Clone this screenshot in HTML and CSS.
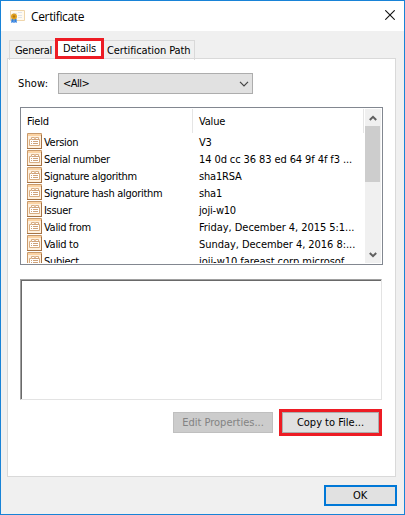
FILE: index.html
```
<!DOCTYPE html>
<html lang="en">
<head>
<meta charset="utf-8">
<title>Certificate</title>
<link rel="stylesheet" href="styles.css">
</head>
<body>
<svg class="defs" width="0" height="0" aria-hidden="true">
  <symbol id="field-icon" viewBox="0 0 15 16">
    <path fill="#fff1df" stroke="#c99a6c" d="M.5.5h14v15H.5z"/>
    <path fill="#fbd3a4" d="M1 1h13v2H1z"/>
    <path fill="#fff" stroke="#d8ad82" d="M2.500 6.500h2v-2h3v1h1v-1h3v2h1v6h-10z"/>
    <path stroke="#cfa27a" d="M5 6.500h7M4 8.500h1M6 8.500h5M4 10.500h1M6 10.500h5"/>
    <path stroke="#a67345" d="M0 15.500h15M14.500 2v14"/>
  </symbol>
</svg>
<div class="window">
  <header class="titlebar">
    <svg class="cert" width="16" height="13" viewBox="0 0 16 13">
      <path fill="#fffaf0" stroke="#efd5aa" d="M1.500.500h14v10h-14z"/>
      <path stroke="#dfe3ea" d="M4 3.500h4M9 2.500h4M9 5.500h4M9 7.500h4"/>
      <path fill="#2f7fe0" d="M2.500 8.500h2.300V13l-1.300-.8-1.300.8zM5.200 8.500h2.300l.3 4.500-1.300-.8-1.300.8z"/>
      <circle cx="5" cy="6.500" r="3" fill="#e0a01e"/><circle cx="5" cy="6.500" r="1.200" fill="#b5760f"/>
    </svg>
    <span class="title">Certificate</span>
    <svg class="close" width="10" height="10" viewBox="0 0 10 10"><path d="M.3.3l9.400 9.400M9.700.3L.3 9.700" stroke="#111" stroke-width="1.100"/></svg>
  </header>
  <nav class="tabs">
    <div class="tab general"><span>General</span></div>
    <div class="tab selected"><span>Details</span></div>
    <div class="tab path"><span>Certification Path</span></div>
  </nav>
  <main class="page">
    <div class="show"><span class="label">Show:</span>
      <div class="combo"><span>&lt;All&gt;</span><svg width="10" height="6" viewBox="0 0 10 6"><path d="M1 .8l4 4 4-4" fill="none" stroke="#444" stroke-width="1.200"/></svg></div>
    </div>
    <div class="list">
      <div class="table">
        <div class="head"><div class="hfield">Field</div><div class="hvalue">Value</div></div>
        <div class="row"><svg><use href="#field-icon"/></svg><span class="f">Version</span><span class="v">V3</span></div>
        <div class="row"><svg><use href="#field-icon"/></svg><span class="f">Serial number</span><span class="v serial">14 0d cc 36 83 ed 64 9f 4f f3 ...</span></div>
        <div class="row"><svg><use href="#field-icon"/></svg><span class="f">Signature algorithm</span><span class="v">sha1RSA</span></div>
        <div class="row"><svg><use href="#field-icon"/></svg><span class="f">Signature hash algorithm</span><span class="v">sha1</span></div>
        <div class="row"><svg><use href="#field-icon"/></svg><span class="f">Issuer</span><span class="v">joji-w10</span></div>
        <div class="row"><svg><use href="#field-icon"/></svg><span class="f">Valid from</span><span class="v date">Friday, December 4, 2015 5:1...</span></div>
        <div class="row"><svg><use href="#field-icon"/></svg><span class="f">Valid to</span><span class="v date">Sunday, December 4, 2016 8:...</span></div>
        <div class="row"><svg><use href="#field-icon"/></svg><span class="f">Subject</span><span class="v subject">joji-w10.fareast.corp.microsof...</span></div>
      </div>
      <div class="scroll">
        <svg width="8" height="6" viewBox="0 0 8 6"><path d="M.8 5L4 1.800 7.200 5" fill="none" stroke="#606060" stroke-width="2"/></svg>
        <div class="thumb"></div>
        <svg class="down" width="8" height="6" viewBox="0 0 8 6"><path d="M.8 1L4 4.200 7.200 1" fill="none" stroke="#606060" stroke-width="2"/></svg>
      </div>
    </div>
    <div class="details"></div>
    <div class="actions">
      <div class="button disabled"><span>Edit Properties...</span></div>
      <div class="highlight"><div class="button copy"><span>Copy to File...</span></div></div>
    </div>
  </main>
  <footer><div class="button ok"><span>OK</span></div></footer>
</div>
</body>
</html>
```
FILE: styles.css
```
* { box-sizing: border-box; }
body { margin: 0; background: #f0f0f0; color: #000; font: 11px/14px "DejaVu Sans Condensed", "DejaVu Sans", sans-serif; font-stretch: condensed; letter-spacing: -.2px; white-space: nowrap; }
.defs { position: absolute; }
.window { width: 405px; height: 515px; border: 1px solid #1883d7; background: #f0f0f0; overflow: hidden; }
.titlebar { height: 30px; display: flex; align-items: flex-start; background: #fff; padding: 9px 9px 0 8px; }
.cert { margin-right: 6px; flex: none; }
.title { font: 12px/14px "Open Sans", sans-serif; letter-spacing: -.35px; }
.close { margin: 0 0 0 auto; }
.tabs { height: 27px; padding: 7px 0 0 8px; display: flex; align-items: flex-start; }
.tab { height: 20px; border: 1px solid #d9d9d9; border-bottom: 0; padding-top: 3px; margin-top: 2px; }
.general { width: 46px; border-right: 0; padding-left: 5px; letter-spacing: -.3px; }
.selected { width: 49px; height: 21px; margin: 0; border: 3px solid #ed1c24; background: #fff; padding: 0 0 0 5px; z-index: 1; line-height: 15px; }
.path { width: 91px; border-left: 0; padding-left: 3px; letter-spacing: -.1px; }
.page { width: 389px; height: 419px; margin-left: 6px; border: 1px solid #d9d9d9; background: #fff; padding: 14px 12px 0; }
.show { display: flex; height: 21px; align-items: center; }
.label { width: 38px; margin-left: -2px; letter-spacing: .15px; }
.combo { width: 195px; height: 21px; margin-left: 2px; border: 1px solid #adadad; background: #e1e1e1; display: flex; align-items: center; justify-content: space-between; padding: 0 3px 0 4px; letter-spacing: -.5px; }
.list { width: 363px; height: 158px; margin-top: 13px; border: 1px solid #828790; padding: 1px; display: flex; overflow: hidden; }
.table { width: 343px; height: 154px; overflow: hidden; }
.head { height: 24px; display: flex; line-height: 26px; }
.hfield { width: 171px; padding-left: 5px; border-right: 1px solid #e5e5e5; }
.hvalue { width: 171px; padding-left: 6px; border-right: 1px solid #e5e5e5; }
.row { height: 17px; display: flex; align-items: flex-start; padding-left: 5px; line-height: 19px; }
.row svg { width: 15px; height: 16px; flex: none; }
.f { width: 157px; padding-left: 2px; letter-spacing: -.3px; }
.v { width: 162px; }
.serial { letter-spacing: -.1px; }
.date { letter-spacing: -.05px; }
.subject { letter-spacing: -.05px; }
.scroll { width: 16px; height: 154px; background: #f0f0f0; display: flex; flex-direction: column; align-items: center; padding-top: 6px; }
.thumb { width: 15px; height: 56px; margin-top: 5px; align-self: flex-start; background: #cdcdcd; }
.down { margin-top: auto; margin-bottom: 5px; }
.details { width: 362px; height: 121px; margin-top: 14px; border: 1px solid; border-color: #a0a0a0 #e3e3e3 #e3e3e3 #a0a0a0; box-shadow: inset 1px 1px #696969; }
.actions { display: flex; margin-top: 9px; padding-left: 153px; align-items: center; }
.button { height: 21px; border: 1px solid #adadad; background: #e1e1e1; display: flex; align-items: center; justify-content: center; }
.disabled { width: 100px; color: #838383; border-color: #bfbfbf; background: #ccc; letter-spacing: 0; }
.highlight { width: 103px; height: 27px; margin-left: 6px; border: 3px solid #ed1c24; letter-spacing: 0; }
footer { height: 37px; display: flex; justify-content: flex-end; padding: 8px 7px 0 0; }
.ok { width: 73px; border: 2px solid #0078d7; padding-right: 1px; }
```
